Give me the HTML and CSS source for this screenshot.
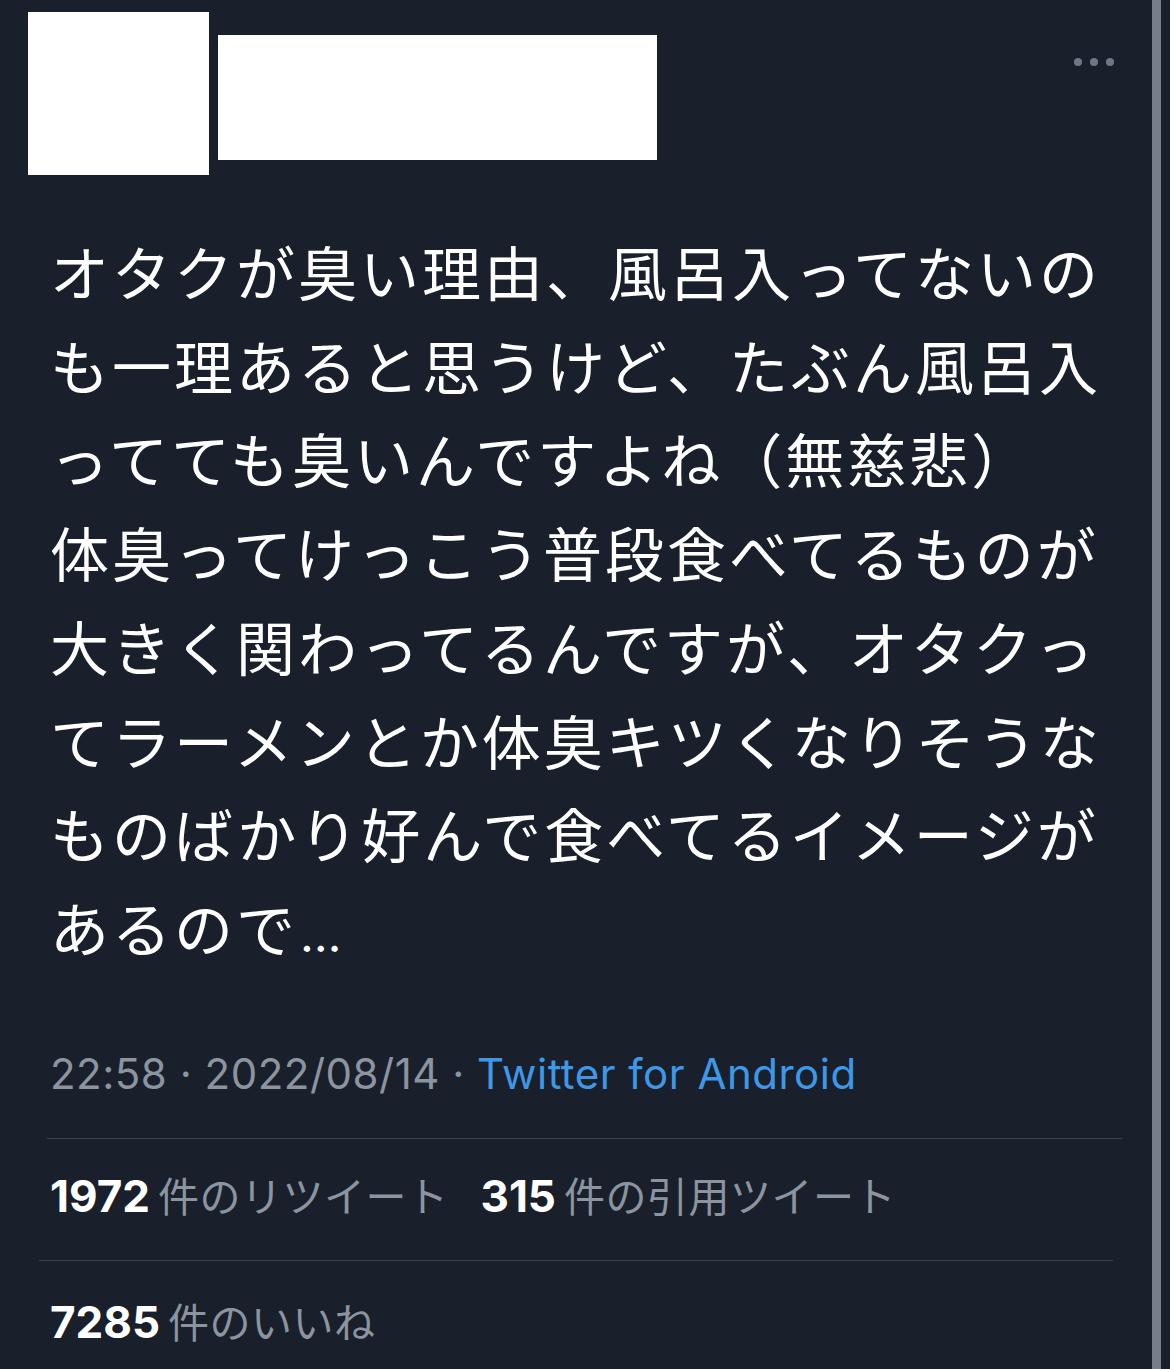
FILE: index.html
```html
<!DOCTYPE html>
<html lang="ja">
<head>
<meta charset="utf-8">
<title>Tweet</title>
<link rel="stylesheet" href="styles.css">
</head>
<body>
<div class="page">
  <main class="main">
    <header class="header">
      <div class="avatar"></div>
      <div class="name"></div>
      <svg class="more" width="40" height="10" viewBox="0 0 40 10" aria-label="more">
        <circle cx="4" cy="5" r="4"/>
        <circle cx="20" cy="5" r="4"/>
        <circle cx="36" cy="5" r="4"/>
      </svg>
    </header>
    <p class="tweet">オタクが臭い理由、風呂入ってないのも一理あると思うけど、たぶん風呂入ってても臭いんですよね（無慈悲）<br>体臭ってけっこう普段食べてるものが大きく関わってるんですが、オタクってラーメンとか体臭キツくなりそうなものばかり好んで食べてるイメージがあるので<span class="ellipsis">…</span></p>
    <div class="meta"><span>22:58 · 2022/08/14 · </span><span class="source">Twitter for Android</span></div>
    <hr class="divider divider-one">
    <div class="stats">
      <span class="stat"><b class="num">1972</b><span class="label">件のリツイート</span></span>
      <span class="stat"><b class="num">315</b><span class="label">件の引用ツイート</span></span>
    </div>
    <hr class="divider divider-two">
    <div class="stats likes">
      <span class="stat"><b class="num">7285</b><span class="label">件のいいね</span></span>
    </div>
  </main>
  <div class="scrollbar"></div>
  <div class="edge"></div>
</div>
</body>
</html>
```

FILE: styles.css
```css
html, body {
  margin: 0;
  padding: 0;
  background: #19202b;
}

body {
  font-family: "Noto Sans CJK JP", "Noto Sans", sans-serif;
  color: #ffffff;
}

.page {
  display: flex;
  height: 1369px;
  overflow: hidden;
}

.main {
  width: 1152px;
  flex: none;
}

.scrollbar {
  width: 9px;
  flex: none;
  background: #787e88;
}

.edge {
  flex: 1;
}

.header {
  display: flex;
  align-items: flex-start;
  padding: 12px 38px 0 28px;
}

.avatar {
  width: 181px;
  height: 163px;
  background: #ffffff;
  flex: none;
}

.name {
  width: 439px;
  height: 125px;
  margin: 23px 0 0 9px;
  background: #ffffff;
  flex: none;
}

.more {
  margin-left: auto;
  margin-top: 45px;
  fill: #6e7787;
}

.tweet {
  margin: 49px 0 0 50px;
  width: 1075px;
  font-size: 59px;
  letter-spacing: 3px;
  line-height: 93.7px;
  font-weight: 400;
  line-break: normal;
  word-break: normal;
}

.ellipsis {
  font-family: "Inter", "Liberation Sans", sans-serif;
  font-size: 48px;
  letter-spacing: 0;
  margin-left: 2px;
}

.meta {
  margin: 67px 0 0 50px;
  font-family: "Inter", "Liberation Sans", sans-serif;
  font-size: 42px;
  letter-spacing: 0.5px;
  line-height: 50px;
  color: #8b949f;
  white-space: nowrap;
}

.source {
  color: #3e98e8;
}

.divider {
  border: 0;
  height: 1px;
  background: #38414d;
  margin: 0;
}

.divider-one {
  margin: 39px 30px 0 47px;
}

.divider-two {
  margin: 39px 39px 0 39px;
}

.stats {
  display: flex;
  gap: 32px;
  margin: 30px 0 0 50px;
  line-height: 50px;
  white-space: nowrap;
}

.likes {
  margin-top: 34px;
}

.stat {
  display: flex;
  align-items: baseline;
  gap: 8px;
}

.num {
  font-family: "Inter", "Liberation Sans", sans-serif;
  font-weight: 700;
  font-size: 44px;
  color: #ffffff;
}

.label {
  font-size: 41px;
  letter-spacing: 0.5px;
  color: #8b949f;
}
```
